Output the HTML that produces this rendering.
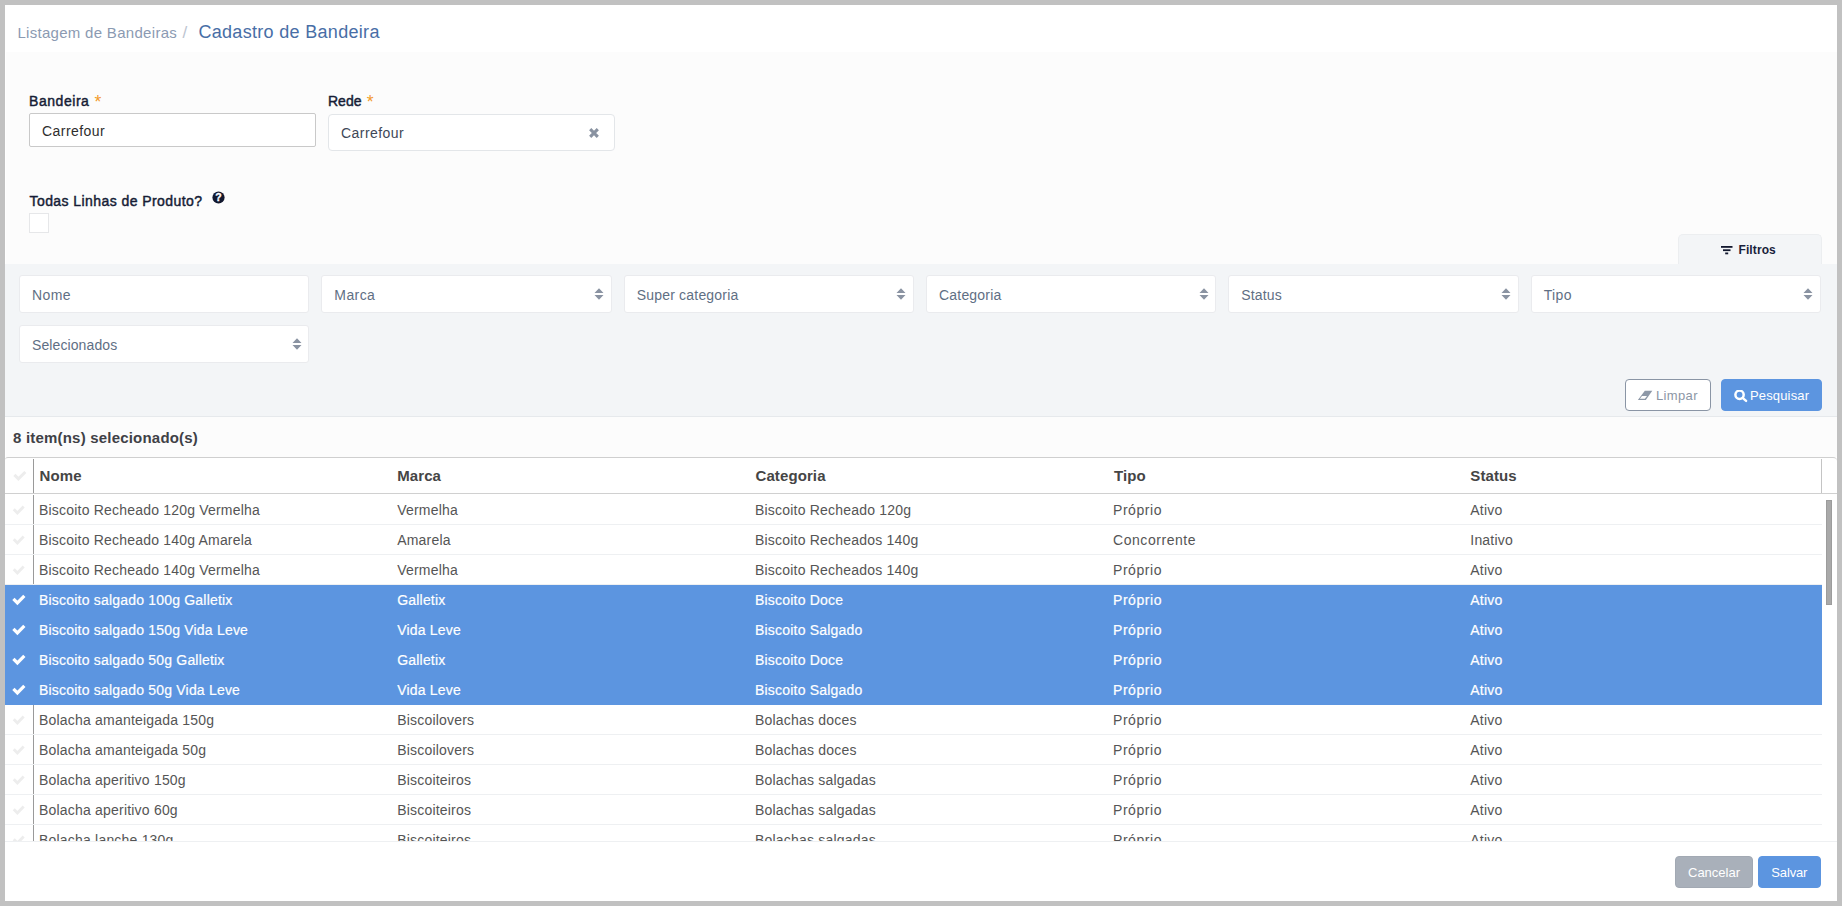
<!DOCTYPE html>
<html lang="pt-BR">
<head>
<meta charset="utf-8">
<title>Cadastro de Bandeira</title>
<style>
*{box-sizing:border-box;margin:0;padding:0}
html,body{width:1842px;height:906px;overflow:hidden;background:#c1c1c1}
body{font-family:"Liberation Sans",sans-serif;font-size:14px;color:#555;position:relative}
.abs{position:absolute}
#page{position:absolute;left:5px;top:5px;width:1832px;height:896px;background:#fff;overflow:hidden}
/* coordinates inside #page are target minus 5 */
#hdr{left:0;top:0;width:1832px;height:47px;background:#fff}
#crumb{left:12.4px;top:19px;font-size:15px;line-height:18px;color:#8b9ab2;letter-spacing:.3px;white-space:nowrap}
#crumbsep{left:177.5px;top:19px;font-size:17px;line-height:18px;color:#bcc4d0}
#title{left:193.4px;top:15.5px;font-size:18px;line-height:22px;color:#486ea6;letter-spacing:.31px;white-space:nowrap}
#formbg{left:1px;top:47px;width:1831px;height:212px;background:#fcfcfc}
.lbl{font-weight:normal;-webkit-text-stroke:.45px #161d36;font-size:14px;line-height:18px;color:#161d36;white-space:nowrap;letter-spacing:.75px}
.ast{font-size:17.5px;line-height:18px;color:#f39a2b}
#inp1{left:24px;top:108px;width:287px;height:34px;border:1px solid #c9c9c9;border-radius:2px;background:#fff;color:#2e2e2e;padding:0 0 0 12px;line-height:34px;letter-spacing:.45px}
#sel1{left:323px;top:109px;width:287px;height:37px;border:1px solid #e3e6e9;border-radius:4px;background:#fff;color:#3e4757;padding:0 0 0 12px;line-height:37px;letter-spacing:.45px}
#chk{left:24px;top:208px;width:20px;height:20px;border:1px solid #e6e7e9;background:#fff}
#tab{left:1673px;top:229px;width:144px;height:31px;background:#f3f5f7;border:1px solid #eceef0;border-bottom:0;border-radius:5px 5px 0 0}
#tabtxt{left:1733.5px;top:238px;font-size:12px;line-height:14px;font-weight:bold;color:#191f3c;letter-spacing:.1px}
#panel{left:0;top:259px;width:1832px;height:153px;background:#f3f5f7;border-bottom:1px solid #e6e9ec}
.fi{position:absolute;height:38px;width:290.33px;border:1px solid #eaebee;border-radius:3px;background:#fff;color:#5f6f84;line-height:38px;padding-left:12px;letter-spacing:.4px;white-space:nowrap}
.fi svg{position:absolute;right:6.7px;top:12px}
.btn{position:absolute;height:32px;border-radius:4px;font-size:13px;line-height:31px;white-space:nowrap;letter-spacing:.35px}
#b1{left:1620px;top:374px;width:86px;border:1px solid #8a95a5;background:#fff;color:#8c96a5}
#b2{left:1716px;top:374px;width:101px;background:#5c95e0;color:#fff;border:1px solid #5c95e0}
#b3{left:1670px;top:851px;width:78px;background:#a9b0ba;color:#fff;border:1px solid #a2a9b3}
#b4{left:1753px;top:851px;width:63px;background:#5c95e0;color:#fff;border:1px solid #5c95e0}
.btn span{position:absolute;top:0}
#cntbg{left:1px;top:412px;width:1831px;height:40px;background:#fcfcfc}
#cnt{left:8px;top:423.5px;font-weight:bold;font-size:15px;line-height:18px;color:#3f4146;white-space:nowrap;letter-spacing:.2px}
#tbl{left:0;top:452px;width:1832px;height:384px;background:#fff;border-top:1px solid #cfcfcf;border-radius:3px 4px 0 0;overflow:hidden}
#thead{left:0;top:0;width:1832px;height:36px;border-bottom:1px solid #d0d0d0}
.th{position:absolute;top:8.5px;font-weight:bold;font-size:15px;line-height:18px;color:#454545;white-space:nowrap;letter-spacing:.1px}
.vs{position:absolute;width:1px;background:#9a9a9a}
.row{position:absolute;left:0;width:1817px;height:30px;border-bottom:1px solid #eef0f2;line-height:31px;white-space:nowrap;letter-spacing:.2px}
.row b{font-weight:normal;position:absolute;top:0}
.row .vs{left:28px;top:0;height:29px}
.row.s{background:#5c95e0;color:#fff;border-bottom-color:#5c95e0;-webkit-text-stroke:.2px #fff}
.row.s .vs{display:none}
.row svg{position:absolute;left:7px;top:8px;overflow:visible}
.c1{left:34px}.c2{left:392.2px}.c3{left:750px}.c4{left:1108px}.c5{left:1465.3px}
.th.c1{margin-left:.5px}.th.c3{margin-left:.5px}.th.c4{margin-left:1px}.row .c4{letter-spacing:.55px}
#sb{left:1821px;top:495px;width:6px;height:105px;background:#a9a9a9;border:1px solid #9c9c9c}
#foot{left:0;top:836px;width:1832px;height:60px;background:#fff;border-top:1px solid #eef0f2}
</style>
</head>
<body>
<div id="page">
  <div id="hdr" class="abs"></div>
  <div id="crumb" class="abs">Listagem de Bandeiras</div>
  <div id="crumbsep" class="abs">/</div>
  <div id="title" class="abs">Cadastro de Bandeira</div>
  <div id="formbg" class="abs"></div>

  <div class="abs lbl" style="left:24px;top:87px;letter-spacing:.55px">Bandeira</div>
  <div class="abs ast" style="left:89.5px;top:88px">*</div>
  <div class="abs lbl" style="left:323px;top:87px;letter-spacing:0">Rede</div>
  <div class="abs ast" style="left:361.7px;top:88px">*</div>
  <div id="inp1" class="abs">Carrefour</div>
  <div id="sel1" class="abs">Carrefour
    <svg class="abs" style="left:259px;top:12px" width="12" height="12" viewBox="0 0 12 12"><path d="M2.2 2.2 L9.8 9.8 M9.8 2.2 L2.2 9.8" stroke="#8992a1" stroke-width="3.1" stroke-linecap="butt" fill="none"/></svg>
  </div>

  <div class="abs lbl" style="left:24.5px;top:187px;letter-spacing:.43px">Todas Linhas de Produto?</div>
  <svg class="abs" style="left:206.7px;top:186.4px" width="13" height="13" viewBox="0 0 13 13"><circle cx="6.5" cy="6.5" r="6.1" fill="#12182f"/><text x="6.5" y="10.2" text-anchor="middle" font-family="Liberation Sans, sans-serif" font-weight="bold" font-size="10.5" fill="#fff" stroke="#fff" stroke-width=".35">?</text></svg>
  <div id="chk" class="abs"></div>

  <div id="tab" class="abs"></div>
  <svg class="abs" style="left:1715.7px;top:240.2px" width="12" height="10" viewBox="0 0 12 10"><rect x="0" y="1" width="11.5" height="1.8" fill="#12182f"/><rect x="2" y="4.3" width="7.5" height="1.8" fill="#12182f"/><rect x="4.2" y="7.5" width="3" height="1.8" fill="#12182f"/></svg>
  <div id="tabtxt" class="abs">Filtros</div>

  <div id="panel" class="abs"></div>
  <div class="fi" style="left:14px;top:270px">Nome</div>
  <div class="fi" style="left:316.33px;top:270px">Marca<svg width="10" height="12" viewBox="0 0 10 12"><path d="M0.5 5 L5 0.3 L9.5 5Z M0.5 7 L5 11.7 L9.5 7Z" fill="#8a93a2"/></svg></div>
  <div class="fi" style="left:618.67px;top:270px;letter-spacing:.2px">Super categoria<svg width="10" height="12" viewBox="0 0 10 12"><path d="M0.5 5 L5 0.3 L9.5 5Z M0.5 7 L5 11.7 L9.5 7Z" fill="#8a93a2"/></svg></div>
  <div class="fi" style="left:921px;top:270px;letter-spacing:.2px">Categoria<svg width="10" height="12" viewBox="0 0 10 12"><path d="M0.5 5 L5 0.3 L9.5 5Z M0.5 7 L5 11.7 L9.5 7Z" fill="#8a93a2"/></svg></div>
  <div class="fi" style="left:1223.33px;top:270px;letter-spacing:.15px">Status<svg width="10" height="12" viewBox="0 0 10 12"><path d="M0.5 5 L5 0.3 L9.5 5Z M0.5 7 L5 11.7 L9.5 7Z" fill="#8a93a2"/></svg></div>
  <div class="fi" style="left:1525.67px;top:270px">Tipo<svg width="10" height="12" viewBox="0 0 10 12"><path d="M0.5 5 L5 0.3 L9.5 5Z M0.5 7 L5 11.7 L9.5 7Z" fill="#8a93a2"/></svg></div>
  <div class="fi" style="left:14px;top:320px;letter-spacing:.1px">Selecionados<svg width="10" height="12" viewBox="0 0 10 12"><path d="M0.5 5 L5 0.3 L9.5 5Z M0.5 7 L5 11.7 L9.5 7Z" fill="#8a93a2"/></svg></div>

  <div id="b1" class="btn">
    <svg class="abs" style="left:11px;top:10px" width="16" height="11" viewBox="0 0 16 11"><path d="M7.8 0.7 H15.3 L8.8 9.9 H0.9 Z" fill="#8d98a7"/><path d="M2.9 8.8 L5.0 6.0 H10.0 L7.9 8.8 Z" fill="#fff"/></svg>
    <span style="left:30px">Limpar</span>
  </div>
  <div id="b2" class="btn">
    <svg class="abs" style="left:12px;top:10px" width="14" height="13" viewBox="0 0 14 13"><circle cx="5.55" cy="4.75" r="4.15" fill="none" stroke="#fff" stroke-width="2.5"/><path d="M8.6 7.8 L12.1 10.9" stroke="#fff" stroke-width="2.4" stroke-linecap="round"/></svg>
    <span style="left:28px;letter-spacing:.15px">Pesquisar</span>
  </div>

  <div id="cntbg" class="abs"></div>
  <div id="cnt" class="abs">8 item(ns) selecionado(s)</div>

  <div id="tbl" class="abs">
    <div id="thead" class="abs">
      <div class="vs" style="left:28px;top:1px;height:34px"></div>
      <div class="vs" style="left:1816px;top:1px;height:34px;background:#c4c4c4"></div>
      <svg class="abs" style="left:7.6px;top:10.8px;overflow:visible" width="14" height="13" viewBox="0 0 14 13"><path d="M1.4 5.9 L5.4 9.9 L12.35 2.95" fill="none" stroke="#ededed" stroke-width="3"/></svg>
      <div class="th c1">Nome</div>
      <div class="th c2">Marca</div>
      <div class="th c3">Categoria</div>
      <div class="th c4">Tipo</div>
      <div class="th c5">Status</div>
    </div>
    <!--ROWS-->
    <div class="row" style="top:37px"><svg width="14" height="13" viewBox="0 0 14 13"><path d="M1.75 6.3 L5.4 9.95 L11.7 3.6" fill="none" stroke="#ededed" stroke-width="2.9"/></svg><i class="vs"></i><b class="c1">Biscoito Recheado 120g Vermelha</b><b class="c2">Vermelha</b><b class="c3">Biscoito Recheado 120g</b><b class="c4">Próprio</b><b class="c5">Ativo</b></div>
    <div class="row" style="top:67px"><svg width="14" height="13" viewBox="0 0 14 13"><path d="M1.75 6.3 L5.4 9.95 L11.7 3.6" fill="none" stroke="#ededed" stroke-width="2.9"/></svg><i class="vs"></i><b class="c1">Biscoito Recheado 140g Amarela</b><b class="c2">Amarela</b><b class="c3">Biscoito Recheados 140g</b><b class="c4">Concorrente</b><b class="c5">Inativo</b></div>
    <div class="row" style="top:97px"><svg width="14" height="13" viewBox="0 0 14 13"><path d="M1.75 6.3 L5.4 9.95 L11.7 3.6" fill="none" stroke="#ededed" stroke-width="2.9"/></svg><i class="vs"></i><b class="c1">Biscoito Recheado 140g Vermelha</b><b class="c2">Vermelha</b><b class="c3">Biscoito Recheados 140g</b><b class="c4">Próprio</b><b class="c5">Ativo</b></div>
    <div class="row s" style="top:127px"><svg width="14" height="13" viewBox="0 0 14 13"><path d="M1.4 5.9 L5.4 9.9 L12.35 2.95" fill="none" stroke="#fff" stroke-width="3.2"/></svg><i class="vs"></i><b class="c1">Biscoito salgado 100g Galletix</b><b class="c2">Galletix</b><b class="c3">Biscoito Doce</b><b class="c4">Próprio</b><b class="c5">Ativo</b></div>
    <div class="row s" style="top:157px"><svg width="14" height="13" viewBox="0 0 14 13"><path d="M1.4 5.9 L5.4 9.9 L12.35 2.95" fill="none" stroke="#fff" stroke-width="3.2"/></svg><i class="vs"></i><b class="c1">Biscoito salgado 150g Vida Leve</b><b class="c2">Vida Leve</b><b class="c3">Biscoito Salgado</b><b class="c4">Próprio</b><b class="c5">Ativo</b></div>
    <div class="row s" style="top:187px"><svg width="14" height="13" viewBox="0 0 14 13"><path d="M1.4 5.9 L5.4 9.9 L12.35 2.95" fill="none" stroke="#fff" stroke-width="3.2"/></svg><i class="vs"></i><b class="c1">Biscoito salgado 50g Galletix</b><b class="c2">Galletix</b><b class="c3">Biscoito Doce</b><b class="c4">Próprio</b><b class="c5">Ativo</b></div>
    <div class="row s" style="top:217px"><svg width="14" height="13" viewBox="0 0 14 13"><path d="M1.4 5.9 L5.4 9.9 L12.35 2.95" fill="none" stroke="#fff" stroke-width="3.2"/></svg><i class="vs"></i><b class="c1">Biscoito salgado 50g Vida Leve</b><b class="c2">Vida Leve</b><b class="c3">Biscoito Salgado</b><b class="c4">Próprio</b><b class="c5">Ativo</b></div>
    <div class="row" style="top:247px"><svg width="14" height="13" viewBox="0 0 14 13"><path d="M1.75 6.3 L5.4 9.95 L11.7 3.6" fill="none" stroke="#ededed" stroke-width="2.9"/></svg><i class="vs"></i><b class="c1">Bolacha amanteigada 150g</b><b class="c2">Biscoilovers</b><b class="c3">Bolachas doces</b><b class="c4">Próprio</b><b class="c5">Ativo</b></div>
    <div class="row" style="top:277px"><svg width="14" height="13" viewBox="0 0 14 13"><path d="M1.75 6.3 L5.4 9.95 L11.7 3.6" fill="none" stroke="#ededed" stroke-width="2.9"/></svg><i class="vs"></i><b class="c1">Bolacha amanteigada 50g</b><b class="c2">Biscoilovers</b><b class="c3">Bolachas doces</b><b class="c4">Próprio</b><b class="c5">Ativo</b></div>
    <div class="row" style="top:307px"><svg width="14" height="13" viewBox="0 0 14 13"><path d="M1.75 6.3 L5.4 9.95 L11.7 3.6" fill="none" stroke="#ededed" stroke-width="2.9"/></svg><i class="vs"></i><b class="c1">Bolacha aperitivo 150g</b><b class="c2">Biscoiteiros</b><b class="c3">Bolachas salgadas</b><b class="c4">Próprio</b><b class="c5">Ativo</b></div>
    <div class="row" style="top:337px"><svg width="14" height="13" viewBox="0 0 14 13"><path d="M1.75 6.3 L5.4 9.95 L11.7 3.6" fill="none" stroke="#ededed" stroke-width="2.9"/></svg><i class="vs"></i><b class="c1">Bolacha aperitivo 60g</b><b class="c2">Biscoiteiros</b><b class="c3">Bolachas salgadas</b><b class="c4">Próprio</b><b class="c5">Ativo</b></div>
    <div class="row" style="top:367px"><svg width="14" height="13" viewBox="0 0 14 13"><path d="M1.75 6.3 L5.4 9.95 L11.7 3.6" fill="none" stroke="#ededed" stroke-width="2.9"/></svg><i class="vs"></i><b class="c1">Bolacha lanche 130g</b><b class="c2">Biscoiteiros</b><b class="c3">Bolachas salgadas</b><b class="c4">Próprio</b><b class="c5">Ativo</b></div>
    <!--/ROWS-->
  </div>
  <div id="sb" class="abs"></div>

  <div id="foot" class="abs"></div>
  <div id="b3" class="btn"><span style="left:12px;letter-spacing:0">Cancelar</span></div>
  <div id="b4" class="btn"><span style="left:12.3px;letter-spacing:-.15px">Salvar</span></div>
</div>
</body>
</html>
